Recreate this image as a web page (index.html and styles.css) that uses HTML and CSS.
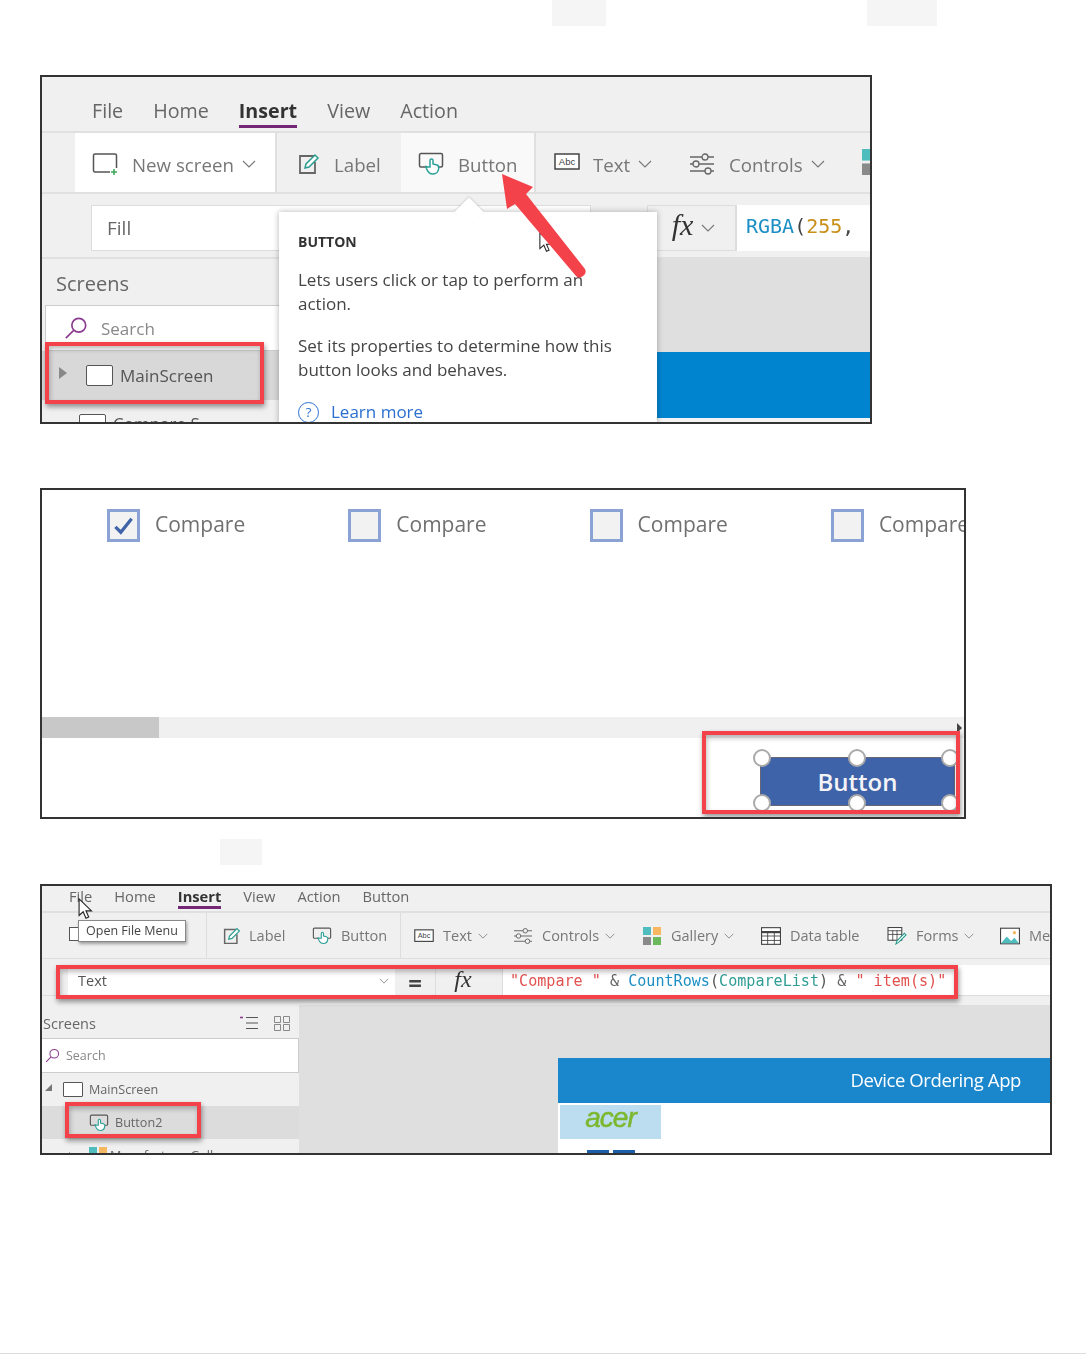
FILE: index.html

```html
<!DOCTYPE html>
<html lang="en">
<head>
  <meta charset="UTF-8" />
  <meta name="viewport" content="width=device-width, initial-scale=1" />
  <title>Compare button steps</title>
  <link rel="stylesheet" href="styles.css">
</head>
<body>
  <svg class="sprite" width="0" height="0">
    <symbol id="i-chev" viewBox="0 0 14 8"><path d="M1 1l6 6 6-6" fill="none" stroke="#777" stroke-width="1.1"/></symbol>
    <symbol id="i-screen" viewBox="0 0 26 24"><path d="M18 20H3a1.500 1.500 0 0 1-1.500-1.500V3.500A1.500 1.500 0 0 1 3 2h20a1.500 1.500 0 0 1 1.500 1.500V16" fill="none" stroke="#555" stroke-width="1.500"/><path d="M22 17v6M19 20h6" stroke="#3aa655" stroke-width="1.500"/></symbol>
    <symbol id="i-label" viewBox="0 0 22 22"><path d="M16 3H2v17h15V9" fill="none" stroke="#666" stroke-width="1.800"/><path d="M7 15l1-4 9-9 3 3-9 9z" fill="#fff" stroke="#2a9d8f" stroke-width="1.500"/></symbol>
    <symbol id="i-button" viewBox="0 0 26 24"><path d="M8 15H3a1.500 1.500 0 0 1-1.500-1.500V3A1.500 1.500 0 0 1 3 1.500h20A1.500 1.500 0 0 1 24.500 3v10.500A1.500 1.500 0 0 1 23 15h-2" fill="none" stroke="#555" stroke-width="1.500"/><path d="M12 15V8.500a1.500 1.500 0 0 1 3 0V12l4 1c1.500.5 2 1.500 1.700 3.500-.5 3.500-2.700 5.500-5.700 5.500-3.500 0-5.500-2.500-6.500-5.500l-.5-2 2 .5z" fill="#fff" stroke="#2aa198" stroke-width="1.500"/></symbol>
    <symbol id="i-abc" viewBox="0 0 26 18"><rect x="1" y="1" width="24" height="15" fill="#fff" stroke="#444" stroke-width="1.500"/><text x="13" y="12" font-size="9.500" font-family="Liberation Sans" text-anchor="middle" fill="#444">Abc</text></symbol>
    <symbol id="i-controls" viewBox="0 0 26 24"><path d="M1 5h24M1 12h24M1 19h24" stroke="#666" stroke-width="1.300"/><circle cx="16" cy="5" r="3" fill="#f0f0f0" stroke="#666" stroke-width="1.300"/><circle cx="7" cy="12" r="3" fill="#f0f0f0" stroke="#666" stroke-width="1.300"/><circle cx="19" cy="19" r="3" fill="#f0f0f0" stroke="#666" stroke-width="1.300"/></symbol>
    <symbol id="i-gallery" viewBox="0 0 18 18"><rect width="8" height="8" fill="#4fbdbd"/><rect x="10" width="8" height="8" fill="#f5b760"/><rect y="10" width="8" height="8" fill="#8a8a8a"/><rect x="10" y="10" width="8" height="8" fill="#6cb85c"/></symbol>
    <symbol id="i-table" viewBox="0 0 18 16"><rect x=".5" y=".5" width="17" height="15" fill="#fff" stroke="#444"/><path d="M.5 4.500h17" stroke="#444" stroke-width="2"/><path d="M.5 8h17M.5 12h17M6 4v12M12 4v12" stroke="#444" stroke-width=".8"/></symbol>
    <symbol id="i-forms" viewBox="0 0 18 17"><rect x=".5" y=".5" width="13" height="12" fill="#fff" stroke="#444"/><path d="M.5 3.500h13M.5 7h13M5 3v10M9 3v10" stroke="#444" stroke-width=".8"/><path d="M8 16l1-3 7-7 1.500 1.500-7 7z" fill="#fff" stroke="#2a9d8f"/></symbol>
    <symbol id="i-media" viewBox="0 0 18 15"><rect x=".5" y=".5" width="17" height="14" fill="#fff" stroke="#444"/><path d="M1 14l5-6 4 4 3-3 4 5z" fill="#4fbdbd"/><circle cx="13" cy="4.500" r="1.500" fill="#f5b760"/></symbol>
    <symbol id="i-search" viewBox="0 0 26 26"><circle cx="16" cy="10" r="7.500" fill="none" stroke="#8a3b8f" stroke-width="1.800"/><path d="M10.500 15.500L2 24" stroke="#8a3b8f" stroke-width="1.800"/></symbol>
    <symbol id="i-cursor" viewBox="0 0 16 24"><path d="M1 1v18l4.500-4 3 7 3-1.300-3-6.700h6z" fill="#fff" stroke="#222" stroke-width="1.200"/></symbol>
  </svg>

  <div class="marks marks-top">
    <span class="mark mark-a"></span>
    <span class="mark mark-b"></span>
  </div>

  <!-- first shot: insert ribbon with tooltip -->
  <div class="shot shot-one">
    <div class="inner">
      <div class="menu">
        <span>File</span><span>Home</span><span class="active">Insert</span><span>View</span><span>Action</span>
      </div>
      <div class="ribbon">
        <div class="tile tile-new"><svg class="ic-26"><use href="#i-screen"/></svg><span>New screen</span><svg class="chev"><use href="#i-chev"/></svg></div>
        <div class="tile tile-label"><svg class="ic-22"><use href="#i-label"/></svg><span>Label</span></div>
        <div class="tile tile-button"><svg class="ic-26"><use href="#i-button"/></svg><span>Button</span></div>
        <div class="tile tile-text"><svg class="ic-26 abc"><use href="#i-abc"/></svg><span>Text</span><svg class="chev"><use href="#i-chev"/></svg></div>
        <div class="tile tile-controls"><svg class="ic-26"><use href="#i-controls"/></svg><span>Controls</span><svg class="chev"><use href="#i-chev"/></svg></div>
        <svg class="ic-gallery-cut"><use href="#i-gallery"/></svg>
      </div>
      <div class="formula">
        <div class="prop">Fill</div>
        <div class="fx-cell"><span class="fx">fx</span><svg class="chev"><use href="#i-chev"/></svg></div>
        <div class="code-cell"><span class="c-fn">RGBA</span>(<span class="c-num">255</span>,</div>
      </div>
      <div class="work">
        <div class="panel">
          <div class="panel-head">Screens</div>
          <div class="search"><svg class="ic-26"><use href="#i-search"/></svg><span>Search</span></div>
          <div class="row row-sel"><i class="tri"></i><span class="thumb"></span><span>MainScreen</span></div>
          <div class="row row-cut"><span class="thumb"></span><span>Compare S</span></div>
        </div>
        <div class="canvas"><div class="band"></div></div>
      </div>
    </div>

    <div class="tip">
      <i class="tip-notch"></i>
      <h4>BUTTON</h4>
      <p>Lets users click or tap to perform an action.</p>
      <p>Set its properties to determine how this button looks and behaves.</p>
      <a class="more"><span class="q">?</span>Learn more</a>
    </div>
    <svg class="cursor cursor-one"><use href="#i-cursor"/></svg>
    <svg class="arrow" viewBox="0 0 90 108"><path d="M2 1L33 14L26 21L85 96Q87 100 83 103Q79 106 76 103L15 31L7 36Z" fill="#f4424a"/></svg>
    <div class="callout callout-main"></div>
  </div>

  <!-- second shot: gallery checkboxes and selected button -->
  <div class="shot shot-two">
    <div class="inner">
      <div class="checks">
        <div class="check"><span class="box"><svg viewBox="0 0 20 20"><path d="M4 11l4 4 8-10" fill="none" stroke="#3e63a8" stroke-width="2.400"/></svg></span>Compare</div>
        <div class="check"><span class="box"></span>Compare</div>
        <div class="check"><span class="box"></span>Compare</div>
        <div class="check"><span class="box"></span>Compare</div>
      </div>
      <div class="scroll"><div class="scroll-thumb"></div></div>
    </div>
    <i class="scroll-end"></i>
    <div class="selected">
      Button
      <i class="h h-tl"></i><i class="h h-tc"></i><i class="h h-tr"></i>
      <i class="h h-bl"></i><i class="h h-bc"></i><i class="h h-br"></i>
    </div>
    <div class="callout callout-button"></div>
  </div>

  <div class="marks marks-mid"><span class="mark mark-c"></span></div>

  <!-- third shot: formula bar with the count text -->
  <div class="shot shot-three">
    <div class="inner">
      <div class="menu menu-sm">
        <span>File</span><span>Home</span><span class="active">Insert</span><span>View</span><span>Action</span><span>Button</span>
      </div>
      <div class="ribbon ribbon-sm">
        <div class="sm-new"></div>
        <div class="tool t-label"><svg class="ic-s"><use href="#i-label"/></svg><span>Label</span></div>
        <div class="tool t-button"><svg class="ic-s"><use href="#i-button"/></svg><span>Button</span></div>
        <div class="tool t-text"><svg class="ic-s"><use href="#i-abc"/></svg><span>Text</span><svg class="chev-s"><use href="#i-chev"/></svg></div>
        <div class="tool t-controls"><svg class="ic-s"><use href="#i-controls"/></svg><span>Controls</span><svg class="chev-s"><use href="#i-chev"/></svg></div>
        <div class="tool t-gallery"><svg class="ic-s"><use href="#i-gallery"/></svg><span>Gallery</span><svg class="chev-s"><use href="#i-chev"/></svg></div>
        <div class="tool t-table"><svg class="ic-s"><use href="#i-table"/></svg><span>Data table</span></div>
        <div class="tool t-forms"><svg class="ic-s"><use href="#i-forms"/></svg><span>Forms</span><svg class="chev-s"><use href="#i-chev"/></svg></div>
        <div class="tool t-media"><svg class="ic-s"><use href="#i-media"/></svg><span>Me</span></div>
      </div>
      <div class="formula formula-sm">
        <div class="prop-sm"><span>Text</span><svg class="chev-s"><use href="#i-chev"/></svg></div>
        <div class="eq">=</div>
        <div class="fx-sm"><span class="fx">fx</span></div>
        <div class="code-sm"><span class="c-str">"Compare "</span> <span class="c-op">&amp;</span> <span class="c-fn">CountRows</span>(<span class="c-var">CompareList</span>) <span class="c-op">&amp;</span> <span class="c-str">" item(s)"</span></div>
      </div>
      <div class="work work-sm">
        <div class="panel panel-sm">
          <div class="panel-head-sm">
            <span>Screens</span>
            <svg class="list-ic" viewBox="0 0 18 14"><path d="M6 1.500h12M6 7h12M6 12.500h12" stroke="#555" stroke-width="1.200"/><path d="M0 1.500h3" stroke="#8a3b8f" stroke-width="1.600"/></svg>
            <svg class="grid-ic" viewBox="0 0 16 15"><path d="M.5.500h6v6h-6zM9.500.500h6v6h-6zM.5 8.500h6v6h-6zM9.500 8.500h6v6h-6z" fill="none" stroke="#888"/></svg>
          </div>
          <div class="search-sm"><svg viewBox="0 0 26 26"><use href="#i-search"/></svg><span>Search</span></div>
          <div class="row-sm"><i class="tri-down"></i><span class="thumb-sm"></span><span>MainScreen</span></div>
          <div class="row-sm row-child"><svg class="ic-s"><use href="#i-button"/></svg><span>Button2</span></div>
          <div class="row-sm row-gallery"><i class="tri-sm"></i><svg class="ic-s"><use href="#i-gallery"/></svg><span>ManufacturerGallery</span></div>
        </div>
        <div class="canvas-sm">
          <div class="app">
            <div class="app-bar">Device Ordering App</div>
            <div class="brand"><span>acer</span></div>
            <div class="brand-next"><i></i><i></i></div>
          </div>
        </div>
      </div>
    </div>
    <div class="hint">Open File Menu</div>
    <i class="hint-box"></i>
    <svg class="cursor cursor-three"><use href="#i-cursor"/></svg>
    <div class="callout callout-formula"></div>
    <div class="callout callout-child"></div>
  </div>

  <div class="foot-line"></div>
</body>
</html>
```

FILE: styles.css

```css
* { margin: 0; padding: 0; box-sizing: border-box; }
html, body {
  background: #fff;
  font-family: 'Open Sans', 'Noto Sans', sans-serif;
  color: #555;
}
body { height: 1354px; overflow: hidden; position: relative; }
.sprite { position: absolute; }

/* pale scraps around the shots */
.marks { display: flex; height: 26px; }
.mark { display: block; height: 26px; background: #f5f5f5; }
.mark-a { width: 54px; margin-left: 552px; }
.mark-b { width: 70px; margin-left: 261px; }
.mark-c { width: 42px; margin-left: 220px; }
.marks-mid { margin-top: 20px; }

.foot-line { position: absolute; left: 0; right: 0; bottom: 0; height: 1px; background: #ddd; }

.shot {
  position: relative;
  margin-left: 40px;
  border: 2px solid #333;
  overflow: hidden;
  background: #f0f0f0;
}
.shot-one { width: 832px; height: 349px; margin-top: 49px; }
.shot-two { width: 926px; height: 331px; margin-top: 64px; background: #fff; }
.shot-three { width: 1012px; height: 271px; margin-top: 19px; }
.inner { height: 100%; display: flex; flex-direction: column; filter: blur(0.55px); }

/* menu row */
.menu {
  flex: none;
  display: flex;
  gap: 30px;
  height: 56px;
  padding: 20px 0 0 50px;
  font-size: 19.700px;
  line-height: 27px;
  color: #666;
  border-bottom: 2px solid #e0e0e0;
}
.menu .active {
  height: 31px;
  font-weight: 700;
  color: #333;
  border-bottom: 3px solid #742774;
}

/* ribbon */
.ribbon {
  flex: none;
  display: flex;
  align-items: stretch;
  height: 61px;
  padding-left: 33px;
  font-size: 18.700px;
  color: #777;
  border-bottom: 2px solid #e0e0e0;
  position: relative;
}
.tile { flex: none; display: flex; align-items: center; padding-top: 3px; }
.tile-new { width: 202px; padding-left: 17px; background: #fff; border-right: 2px solid #e0e0e0; }
.tile-new span { margin-left: 14px; }
.tile-label { width: 124px; padding-left: 21px; }
.tile-label span { margin-left: 14px; }
.tile-button { width: 135px; padding-left: 17px; background: #f9f9f9; border-right: 2px solid #e0e0e0; }
.tile-button span { margin-left: 14px; }
.tile-text { width: 153px; padding-left: 18px; }
.tile-text span { margin-left: 13px; }
.tile-controls { width: 173px; padding-left: 0; }
.tile-controls span { margin-left: 14px; }
.ic-26 { width: 26px; height: 24px; flex: none; }
.ic-22 { width: 22px; height: 22px; flex: none; }
.abc { margin-bottom: 4px; }
.chev { width: 14px; height: 8px; margin-left: 8px; flex: none; }
.ic-gallery-cut { width: 26px; height: 26px; flex: none; margin-top: 16px; }

/* formula row */
.formula {
  flex: none;
  display: flex;
  height: 65px;
  padding: 11px 0 6px 49px;
  border-bottom: 2px solid #e0e0e0;
}
.prop {
  width: 500px;
  background: #fff;
  border: 1px solid #ddd;
  font-size: 19px;
  line-height: 44px;
  padding-left: 15px;
  color: #666;
}
.fx-cell {
  width: 90px;
  margin-left: 56px;
  display: flex;
  align-items: center;
  justify-content: center;
  padding-left: 4px;
  border: 1px solid #ddd;
  border-right-width: 2px;
}
.fx-cell .fx { margin-bottom: 6px; }
.fx { font-family: 'Liberation Serif', serif; font-style: italic; font-size: 30px; color: #333; line-height: 1; }
.code-cell {
  flex: 1;
  background: #fff;
  font-family: 'DejaVu Sans Mono', monospace;
  font-size: 20px;
  line-height: 42px;
  padding-left: 9px;
  color: #444;
}
.c-fn { color: #1d8fc4; }
.c-num { color: #c8901a; }
.c-str { color: #e2514f; }
.c-var { color: #2f9d94; }
.c-op { color: #666; }

/* left panel and canvas */
.work { flex: 1; display: flex; min-height: 0; }
.panel { width: 237px; flex: none; }
.panel-head { height: 46px; padding: 11px 0 0 14px; font-size: 20px; line-height: 28px; color: #666; }
.search {
  display: flex;
  align-items: center;
  height: 46px;
  margin-left: 3px;
  padding-left: 17px;
  background: #fff;
  border: 1px solid #ccc;
  border-right: 0;
  font-size: 17px;
  color: #888;
}
.search span { margin-left: 12px; }
.row { display: flex; align-items: center; height: 49px; font-size: 17px; color: #555; padding-left: 17px; }
.row-sel { background: #d8d8d8; }
.tri { width: 0; height: 0; border-left: 8px solid #888; border-top: 6px solid transparent; border-bottom: 6px solid transparent; margin: 0 19px 6px 0; }
.thumb { width: 27px; height: 21px; background: #fff; border: 1.500px solid #555; border-radius: 2px; margin-right: 7px; flex: none; }
.row-cut { padding-left: 37px; padding-top: 14px; align-items: flex-start; line-height: 20px; }
.canvas { flex: 1; background: #dfdfdf; padding-top: 93px; }
.band { height: 66px; background: #0084d0; box-shadow: 0 6px 0 #f4f4f4; }

.callout {
  position: absolute;
  border: 4px solid #f4424a;
  box-shadow: 1px 3px 5px rgba(0, 0, 0, 0.4), inset 1px 3px 5px rgba(0, 0, 0, 0.25);
}
.callout-main { left: 3px; top: 265px; width: 219px; height: 62px; }

/* tooltip */
.tip {
  position: absolute;
  left: 237px;
  top: 135px;
  width: 378px;
  height: 214px;
  background: #fff;
  padding: 19px 19px 0;
  font-size: 17px;
  line-height: 24px;
  color: #444;
  box-shadow: 0 0 6px rgba(0, 0, 0, 0.3);
}
.tip h4 { font-size: 14px; font-weight: 700; color: #333; line-height: 22px; margin-bottom: 15px; }
.tip p { margin-bottom: 18px; max-width: 325px; }
.tip-notch {
  position: absolute;
  left: 177px;
  top: -13px;
  width: 26px;
  height: 26px;
  background: #fff;
  transform: rotate(45deg) scale(0.8);
  box-shadow: -1px -1px 2px rgba(0, 0, 0, 0.15);
}
.more { display: flex; align-items: center; color: #2b6fd0; font-size: 17px; }
.q {
  width: 21px;
  height: 21px;
  border: 1.500px solid #2b6fd0;
  border-radius: 50%;
  font-size: 13px;
  line-height: 18px;
  text-align: center;
  margin-right: 12px;
}
.cursor { position: absolute; width: 14px; height: 21px; }
.cursor-one { left: 497px; top: 155px; }
.arrow { position: absolute; left: 458px; top: 96px; width: 90px; height: 108px; }

/* second shot */
.checks { flex: none; display: flex; height: 227px; padding: 19px 0 0 65px; }
.check {
  flex: none;
  width: 241.300px;
  display: flex;
  align-items: flex-start;
  font-size: 21px;
  line-height: 31px;
  color: #707070;
}
.box {
  width: 33px;
  height: 33px;
  flex: none;
  margin-right: 15px;
  background: #f2f2f2;
  border: 3px solid #8ba3d4;
}
.box svg { display: block; width: 27px; height: 27px; }
.scroll { flex: none; height: 21px; background: #f0f0f0; }
.scroll-thumb { width: 117px; height: 100%; background: #c8c8c8; }
.scroll-end {
  position: absolute;
  left: 915px;
  top: 233px;
  border-left: 5px solid #444;
  border-top: 5px solid transparent;
  border-bottom: 5px solid transparent;
}
.selected {
  position: absolute;
  left: 718px;
  top: 267px;
  width: 195px;
  height: 49px;
  background: #3e63a8;
  border: 1px solid #667;
  color: #f4f4f8;
  font-size: 24px;
  font-weight: 600;
  line-height: 47px;
  text-align: center;
}
.h { position: absolute; width: 18px; height: 18px; border-radius: 50%; background: #fff; border: 2px solid #aaa; }
.h-tl { left: -8px; top: -9px; }
.h-tc { left: 87px; top: -9px; }
.h-tr { right: -5px; top: -9px; }
.h-bl { left: -8px; bottom: -7px; }
.h-bc { left: 87px; bottom: -7px; }
.h-br { right: -5px; bottom: -7px; }
.callout-button { left: 660px; top: 241px; width: 258px; height: 83px; }

/* third shot */
.menu-sm {
  height: 27px;
  gap: 22px;
  padding: 0 0 0 27px;
  font-size: 14.700px;
  line-height: 20px;
}
.menu-sm .active { height: 23px; border-bottom-width: 3px; }
.ribbon-sm {
  height: 46px;
  padding-left: 0;
  font-size: 14.500px;
  align-items: center;
  border-bottom: 1px solid #ddd;
}
.sm-new { flex: none; width: 165px; height: 100%; border-right: 1px solid #ddd; }
.tool { flex: none; display: flex; align-items: center; height: 100%; }
.tool span { margin-left: 9px; }
.ic-s { width: 20px; height: 18px; flex: none; }
.chev-s { width: 10px; height: 6px; margin-left: 6px; flex: none; }
.t-label { width: 105px; padding-left: 15px; }
.t-label span { margin-left: 7px; }
.t-button { width: 89px; border-right: 1px solid #ddd; }
.t-text { width: 112px; padding-left: 13px; }
.t-controls { width: 129px; }
.t-gallery { width: 119px; }
.t-table { width: 126px; }
.t-forms { width: 113px; }
.t-media { width: 60px; }
.formula-sm {
  height: 37px;
  padding: 6px 0 0 26px;
  border-bottom: 1px solid #ddd;
}
.prop-sm {
  flex: none;
  width: 327px;
  height: 30px;
  display: flex;
  align-items: center;
  justify-content: space-between;
  background: #fff;
  padding: 1px 6px 0 10px;
  font-size: 14.500px;
  color: #555;
}
.eq {
  flex: none;
  width: 41px;
  padding-top: 3px;
  text-align: center;
  font-size: 24px;
  line-height: 30px;
  font-weight: 700;
  color: #444;
  border-right: 1px solid #ddd;
}
.fx-sm { flex: none; width: 67px; padding-right: 12px; text-align: center; border-right: 1px solid #ddd; }
.fx-sm .fx { font-size: 24px; line-height: 28px; }
.code-sm {
  flex: 1;
  height: 30px;
  background: #fff;
  padding: 1px 0 0 7px;
  font-family: 'DejaVu Sans Mono', monospace;
  font-size: 15.100px;
  line-height: 30px;
  color: #555;
  white-space: nowrap;
}
.work-sm { padding-top: 9px; }
.panel-sm { width: 257px; background: #f0f0f0; }
.panel-head-sm {
  display: flex;
  align-items: center;
  height: 33px;
  padding: 3px 0 0 1px;
  font-size: 14.500px;
  color: #666;
}
.panel-head-sm span { width: 197px; }
.list-ic { width: 18px; height: 14px; }
.grid-ic { width: 16px; height: 15px; margin-left: 16px; }
.search-sm {
  display: flex;
  align-items: center;
  height: 35px;
  background: #fff;
  border: 1px solid #ccc;
  border-left: 0;
  padding: 0 0 1px 3px;
  font-size: 12.500px;
  color: #888;
}
.search-sm svg { width: 15px; height: 15px; }
.search-sm span { margin-left: 6px; }
.row-sm { display: flex; align-items: center; height: 33px; padding-left: 3px; font-size: 12.600px; color: #666; }
.tri-down { width: 0; height: 0; border-right: 7px solid #777; border-top: 7px solid transparent; margin: 0 11px 5px 0; }
.thumb-sm { width: 20px; height: 15px; background: #fff; border: 1px solid #555; border-radius: 1px; margin-right: 6px; }
.row-child { background: #dcdcdc; padding-left: 47px; }
.row-child span { margin-left: 6px; }
.row-gallery { padding-left: 27px; }
.row-gallery span { margin-left: 2px; }
.tri-sm { border-left: 5px solid #777; border-top: 4px solid transparent; border-bottom: 4px solid transparent; margin-right: 14px; }
.canvas-sm { flex: 1; background: #dfdfdf; padding: 53px 0 0 259px; }
.app { height: 100%; background: #fff; }
.app-bar {
  height: 45px;
  background: #1a87cd;
  color: #fff;
  font-size: 18.500px;
  line-height: 44px;
  text-align: right;
  padding-right: 29px;
  letter-spacing: -0.4px;
}
.brand { width: 101px; height: 34px; margin: 2px 0 0 2px; background: #bcdcf0; text-align: center; }
.brand span {
  font-family: 'Liberation Sans', sans-serif;
  font-style: italic;
  font-size: 28px;
  line-height: 26px;
  letter-spacing: -1px;
  color: #7cb82f;
  -webkit-text-stroke: 0.5px #7cb82f;
  display: block;
}
.brand-next { display: flex; gap: 4px; padding: 11px 0 0 29px; }
.brand-next i { width: 22px; height: 6px; background: #1c5fa8; }
.hint {
  position: absolute;
  left: 36px;
  top: 34px;
  width: 108px;
  height: 22px;
  background: #fff;
  border: 1px solid #888;
  box-shadow: 1px 2px 3px rgba(0, 0, 0, 0.35);
  font-size: 12.500px;
  line-height: 19px;
  text-align: center;
  color: #444;
  white-space: nowrap;
}
.hint-box { position: absolute; left: 27px; top: 41px; width: 9px; height: 14px; background: #fff; border: 1px solid #555; border-right: 0; }
.cursor-three { left: 36px; top: 12px; width: 15px; height: 22px; }
.callout-formula { left: 14px; top: 79px; width: 902px; height: 34px; }
.callout-child { left: 23px; top: 216px; width: 136px; height: 36px; }
```
